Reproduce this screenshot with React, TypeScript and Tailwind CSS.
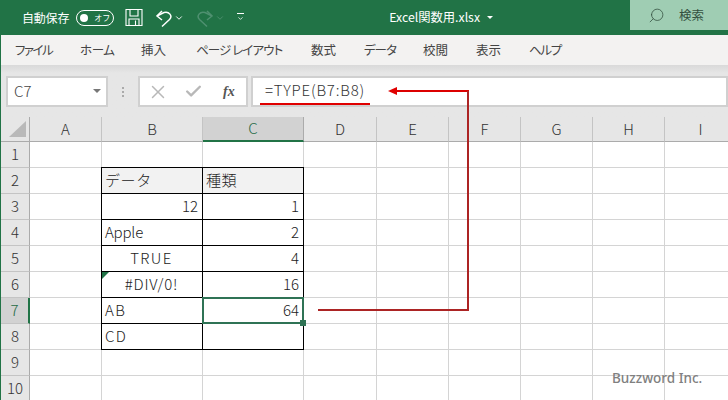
import { ChevronDown, Search, X, Check } from "lucide-react";

const font = { fontFamily: '"Noto Sans CJK JP", "Noto Sans", sans-serif' };

const tabs = [
  { label: "ファイル", width: "w-[65px]", track: "tracking-[-1.5px]" },
  { label: "ホーム", width: "w-[61px]", track: "tracking-[-0.4px]" },
  { label: "挿入", width: "w-[55px]", track: "" },
  { label: "ページ レイアウト", width: "w-[115px]", track: "tracking-[-0.9px]" },
  { label: "数式", width: "w-[53px]", track: "" },
  { label: "データ", width: "w-[59px]", track: "tracking-[-1px]" },
  { label: "校閲", width: "w-[53px]", track: "" },
  { label: "表示", width: "w-[53px]", track: "" },
  { label: "ヘルプ", width: "w-[60px]", track: "tracking-[-1.3px]" },
];

const columns = [
  { label: "A", width: "w-[72px]" },
  { label: "B", width: "w-[101px]" },
  { label: "C", width: "w-[101px]" },
  { label: "D", width: "w-[73px]" },
  { label: "E", width: "w-[72px]" },
  { label: "F", width: "w-[72px]" },
  { label: "G", width: "w-[72px]" },
  { label: "H", width: "w-[72px]" },
  { label: "I", width: "w-[72px]" },
];

type Cell = { text: string; align: string; track?: string; head?: boolean; marker?: boolean };

const tableRows: Record<number, [Cell, Cell]> = {
  2: [
    { text: "データ", align: "text-left", track: "tracking-[0.6px]", head: true },
    { text: "種類", align: "text-left", track: "tracking-[0.6px]", head: true },
  ],
  3: [
    { text: "12", align: "text-right" },
    { text: "1", align: "text-right" },
  ],
  4: [
    { text: "Apple", align: "text-left", track: "tracking-[-0.2px]" },
    { text: "2", align: "text-right" },
  ],
  5: [
    { text: "TRUE", align: "text-center", track: "tracking-[1.4px]" },
    { text: "4", align: "text-right" },
  ],
  6: [
    { text: "#DIV/0!", align: "text-center", track: "tracking-[0.8px]", marker: true },
    { text: "16", align: "text-right" },
  ],
  7: [
    { text: "AB", align: "text-left", track: "tracking-[1.4px]" },
    { text: "64", align: "text-right" },
  ],
  8: [
    { text: "CD", align: "text-left", track: "tracking-[1.4px]" },
    { text: "", align: "text-right" },
  ],
};

function SaveIcon() {
  return (
    <svg className="ml-[11px] shrink-0" width="18" height="19" viewBox="0 0 18 19" fill="none" stroke="white" strokeWidth="1.1">
      <path d="M1 1.5 H17 V17.5 H1 Z" />
      <path d="M5 1.5 V8 H13 V1.5" />
      <path d="M4 17.5 V11 H14 V17.5" />
      <path d="M10.5 12.5 V17.5" />
    </svg>
  );
}

function UndoIcon({ flip, color }: { flip?: boolean; color: string }) {
  return (
    <svg
      className={`shrink-0 ${flip ? "-scale-x-100" : ""}`}
      width="18"
      height="20"
      viewBox="0 0 18 20"
      fill="none"
      stroke={color}
      strokeWidth="1.5"
    >
      <path d="M7 3 L2 8 L7 12" />
      <path d="M2 8 L9 4.5 C14 3 18 8 14.5 11.5 L7 18.5" />
    </svg>
  );
}

function TitleBar() {
  return (
    <div className="h-[35px] bg-[#217346] flex items-center text-white shrink-0">
      <span className="ml-[21px] text-[12px] tracking-[-0.2px]">自動保存</span>
      <div className="ml-[7px] w-[38px] h-[16px] rounded-full border border-white flex items-center pl-[3px] gap-[6px]">
        <div className="w-[8px] h-[8px] rounded-full bg-white" />
        <span className="text-[8px] leading-none">オフ</span>
      </div>
      <SaveIcon />
      <div className="ml-[12px]">
        <UndoIcon color="white" />
      </div>
      <ChevronDown className="ml-[1px] w-[10px] h-[10px]" strokeWidth={2.2} />
      <div className="ml-[12px]">
        <UndoIcon flip color="#4f9070" />
      </div>
      <ChevronDown className="ml-[1px] w-[10px] h-[10px] text-[#4f9070]" strokeWidth={2.2} />
      <div className="ml-[11px] flex flex-col items-center gap-[1px]">
        <div className="w-[7px] h-px bg-white" />
        <ChevronDown className="w-[9px] h-[7px]" strokeWidth={2.6} />
      </div>
      <span className="ml-[144px] text-[12.3px]">Excel関数用.xlsx</span>
      <div className="ml-[7px] w-0 h-0 border-l-[3px] border-r-[3px] border-t-[3px] border-l-transparent border-r-transparent border-t-white" />
      <div className="ml-auto w-[98px] h-[30px] self-start bg-[#9fcdb3] flex items-center text-[#33503f]">
        <Search className="ml-[18px] w-[17px] h-[17px] -scale-x-100" strokeWidth={1.1} />
        <span className="ml-[14px] text-[12.5px]">検索</span>
      </div>
    </div>
  );
}

function RibbonTabs() {
  return (
    <div className="h-[30px] bg-[#f3f2f1] flex items-center pl-[14px] shrink-0 text-[12.5px] text-[#444444] [font-feature-settings:'palt']">
      {tabs.map((tab) => (
        <div key={tab.label} className={`${tab.width} ${tab.track} shrink-0 whitespace-nowrap`}>
          {tab.label}
        </div>
      ))}
    </div>
  );
}

function FormulaBar() {
  return (
    <div className="h-[52px] bg-gradient-to-b from-[#d9d9d9] to-[#e6e6e6] to-[8px] flex pt-[11px] pl-[5px] shrink-0">
      <div className="w-[102px] h-[31px] bg-white border-2 border-[#d0d0d0] flex items-center justify-between pl-[6px] pr-[5px] pb-[1px] text-[15px] font-light text-[#444444]">
        C7
        <div className="w-0 h-0 border-l-[4px] border-r-[4px] border-t-[4px] border-l-transparent border-r-transparent border-t-[#777777]" />
      </div>
      <div className="w-[30px] flex flex-col items-center justify-center gap-[2px] h-[31px]">
        <div className="w-[2px] h-[2px] bg-[#aaaaaa]" />
        <div className="w-[2px] h-[2px] bg-[#aaaaaa]" />
        <div className="w-[2px] h-[2px] bg-[#aaaaaa]" />
      </div>
      <div className="w-[110px] h-[31px] bg-white border-2 border-[#d0d0d0] flex items-center text-[#b8b8b8]">
        <X className="ml-[7px] w-[22px] h-[22px] shrink-0" strokeWidth={1.6} />
        <Check className="ml-[15px] w-[19px] h-[19px] shrink-0" strokeWidth={3} />
        <span
          className="ml-[20px] text-[14px] italic font-bold text-[#555555] leading-none"
          style={{ fontFamily: '"Liberation Serif", serif' }}
        >
          fx
        </span>
      </div>
      <div className="ml-[3px] flex-1 h-[31px] bg-white border-2 border-[#d0d0d0] flex items-center pl-[12px] pb-[2px] text-[15px] font-light tracking-[0.8px] text-[#333333]">
        =TYPE(B7:B8)
      </div>
    </div>
  );
}

function ColumnHeaders() {
  return (
    <div className="h-[25px] flex shrink-0">
      <div className="w-[29px] shrink-0 bg-[#e6e6e6] border-r border-b border-[#ababab] flex items-end justify-end pr-[3px] pb-[4px]">
        <div className="w-0 h-0 border-l-[17px] border-b-[16px] border-l-transparent border-b-[#b9b9b9]" />
      </div>
      {columns.map((col) => {
        const active = col.label === "C";
        return (
          <div
            key={col.label}
            className={`${col.width} shrink-0 flex items-center justify-center text-[15px] font-light border-r ${
              active
                ? "bg-[#d2d2d2] text-[#1e6b45] border-b-2 border-b-[#217346] border-r-[#ababab]"
                : "bg-[#e6e6e6] text-[#333333] border-b border-b-[#ababab] border-r-[#c4c4c4]"
            }`}
          >
            {col.label}
          </div>
        );
      })}
    </div>
  );
}

function TableCell({ cell, row, first, active }: { cell: Cell; row: number; first: boolean; active: boolean }) {
  return (
    <div
      className={`relative shrink-0 border-r border-b border-black px-[3px] pb-[2px] flex items-center ${
        row === 2 ? "-mt-px h-[27px] border-t" : "h-[26px]"
      } ${first ? "-ml-px w-[102px] border-l" : "w-[101px]"} ${cell.head ? "bg-[#f2f2f2]" : "bg-white"}`}
    >
      <span className={`w-full text-[15px] font-light text-[#222222] leading-none pr-[1px] ${cell.align} ${cell.track ?? ""}`}>
        {cell.text}
      </span>
      {cell.marker && (
        <div className="absolute left-0 top-0 w-0 h-0 border-t-[7px] border-r-[7px] border-t-[#217346] border-r-transparent" />
      )}
      {active && (
        <>
          <div className="absolute -left-px -top-px -right-px -bottom-px border-2 border-[#2f7355]" />
          <div className="absolute z-10 -right-[3px] -bottom-[3px] w-[6px] h-[6px] bg-[#2f7355]" />
        </>
      )}
    </div>
  );
}

function Sheet() {
  const rows = [1, 2, 3, 4, 5, 6, 7, 8, 9, 10];
  const rest = columns.slice(3);
  return (
    <div className="flex-1 bg-white overflow-hidden">
      {rows.map((row) => {
        const cells = tableRows[row];
        const active = row === 7;
        return (
          <div key={row} className="h-[26px] flex">
            <div
              className={`w-[29px] shrink-0 flex items-center justify-center text-[15px] font-light border-b border-b-[#c4c4c4] border-r ${
                active
                  ? "bg-[#d2d2d2] text-[#1e6b45] border-r-2 border-r-[#217346]"
                  : "bg-[#e6e6e6] text-[#333333] border-r-[#ababab]"
              }`}
            >
              {row}
            </div>
            <div className="w-[72px] shrink-0 border-b border-r border-[#d4d4d4]" />
            {cells ? (
              <>
                <TableCell cell={cells[0]} row={row} first active={false} />
                <TableCell cell={cells[1]} row={row} first={false} active={active} />
              </>
            ) : (
              <>
                <div className="w-[101px] shrink-0 border-b border-r border-[#d4d4d4]" />
                <div className="w-[101px] shrink-0 border-b border-r border-[#d4d4d4]" />
              </>
            )}
            {rest.map((col) => (
              <div key={col.label} className={`${col.width} shrink-0 border-b border-r border-[#d4d4d4]`} />
            ))}
          </div>
        );
      })}
    </div>
  );
}

export default function App() {
  return (
    <div
      className="relative w-[728px] h-[400px] overflow-hidden flex flex-col bg-white border-l border-l-[#217346]"
      style={font}
    >
      <TitleBar />
      <RibbonTabs />
      <FormulaBar />
      <ColumnHeaders />
      <Sheet />
      {/* red annotation over the sheet */}
      <svg className="absolute left-[-1px] top-0 pointer-events-none" width="728" height="400">
        <line x1="260" y1="104" x2="370" y2="104" stroke="#e00000" strokeWidth="2" />
        <line x1="396" y1="91" x2="469" y2="91" stroke="#dc0000" strokeWidth="2" />
        <path d="M468 91 V310 H318" fill="none" stroke="#ac2424" strokeWidth="2" />
        <path d="M388 91 L397 87 V95 Z" fill="#e00000" />
      </svg>
      <span
        className="absolute left-[611px] top-[368px] text-[13.5px] font-medium text-[#808080]"
        style={{ fontFamily: '"Noto Sans", sans-serif' }}
      >
        Buzzword Inc.
      </span>
    </div>
  );
}
